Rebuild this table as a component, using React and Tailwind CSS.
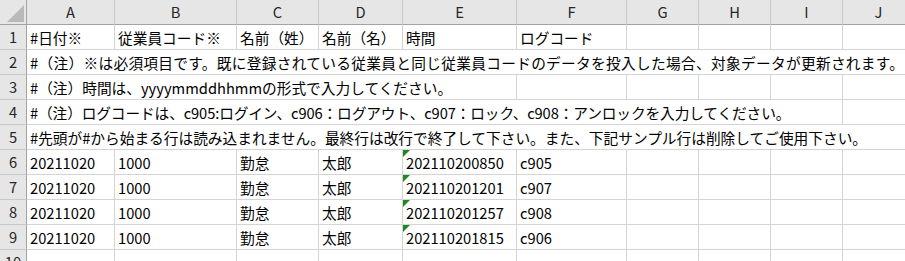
import React from 'react';

const FONT = { fontFamily: '"Noto Sans CJK JP", "Noto Sans", sans-serif' };

const COLS = ['A', 'B', 'C', 'D', 'E', 'F', 'G', 'H', 'I', 'J'];

const HEAD = ['#日付※', '従業員コード※', '名前（姓）', '名前（名）', '時間', 'ログコード'];

const NOTES = [
  { n: 2, span: 10, cls: 'tracking-[0.3px]', text: '#（注）※は必須項目です。既に登録されている従業員と同じ従業員コードのデータを投入した場合、対象データが更新されます。' },
  { n: 3, span: 5, cls: '', text: '#（注）時間は、yyyymmddhhmmの形式で入力してください。' },
  { n: 4, span: 9, cls: 'tracking-[-0.12px]', text: '#（注）ログコードは、c905:ログイン、c906：ログアウト、c907：ロック、c908：アンロックを入力してください。' },
  { n: 5, span: 10, cls: '', text: '#先頭が#から始まる行は読み込まれません。最終行は改行で終了して下さい。また、下記サンプル行は削除してご使用下さい。' },
];

const DATA = [
  { n: 6, time: '202110200850', code: 'c905' },
  { n: 7, time: '202110201201', code: 'c907' },
  { n: 8, time: '202110201257', code: 'c908' },
  { n: 9, time: '202110201815', code: 'c906' },
];

const spanCls = {
  5: 'col-span-5',
  9: 'col-span-9',
  10: 'col-span-10',
};

function RowNum({ n }) {
  return (
    <div className="h-[25px] bg-[#e6e6e6] border-r border-b border-r-[#a3a3a3] border-b-[#c9c9c9] flex items-center justify-center text-[#262626] text-[14.7px] pt-[1px]">
      {n}
    </div>
  );
}

function Cell({ children, className = '', mark }) {
  return (
    <div className={`relative h-[25px] bg-white border-r border-b border-[#d4d4d4] flex items-center pl-[3px] pt-[2px] whitespace-nowrap overflow-hidden text-black text-[14.7px] ${className}`}>
      {mark && (
        <svg className="absolute left-0 top-0" width="7" height="7" viewBox="0 0 7 7">
          <polygon points="0,0 7,0 0,7" fill="#1e8a1e" />
        </svg>
      )}
      {children}
    </div>
  );
}

export default function App() {
  return (
    <div className="w-[905px] h-[261px] overflow-hidden bg-white" style={FONT}>
      <div className="grid w-[915px] grid-cols-[27px_88px_122px_82px_84px_114px_110px_72px_72px_72px_72px]">
        {/* column headers */}
        <div className="relative h-[25px] bg-[#e6e6e6] border-r border-b border-[#a3a3a3]">
          <svg className="absolute left-[7px] top-[5px]" width="17" height="17" viewBox="0 0 17 17">
            <polygon points="17,0 17,17 0,17" fill="#b9b9b9" />
          </svg>
        </div>
        {COLS.map((c) => (
          <div key={c} className="h-[25px] bg-[#e6e6e6] border-r border-b border-r-[#c9c9c9] border-b-[#a3a3a3] flex items-center justify-center text-[#262626] text-[14.7px]">
            {c}
          </div>
        ))}

        {/* row 1 */}
        <RowNum n={1} />
        {COLS.map((c, i) => (
          <Cell key={c}>{HEAD[i] || ''}</Cell>
        ))}

        {/* notes */}
        {NOTES.map((r) => (
          <React.Fragment key={r.n}>
            <RowNum n={r.n} />
            <Cell className={`${spanCls[r.span]} ${r.cls}`}>{r.text}</Cell>
            {Array.from({ length: 10 - r.span }).map((_, i) => (
              <Cell key={i} />
            ))}
          </React.Fragment>
        ))}

        {/* sample rows */}
        {DATA.map((r) => (
          <React.Fragment key={r.n}>
            <RowNum n={r.n} />
            <Cell>20211020</Cell>
            <Cell>1000</Cell>
            <Cell>勤怠</Cell>
            <Cell>太郎</Cell>
            <Cell mark>{r.time}</Cell>
            <Cell>{r.code}</Cell>
            <Cell />
            <Cell />
            <Cell />
            <Cell />
          </React.Fragment>
        ))}

        <RowNum n={10} />
        {COLS.map((c) => (
          <Cell key={c} />
        ))}
      </div>
    </div>
  );
}
